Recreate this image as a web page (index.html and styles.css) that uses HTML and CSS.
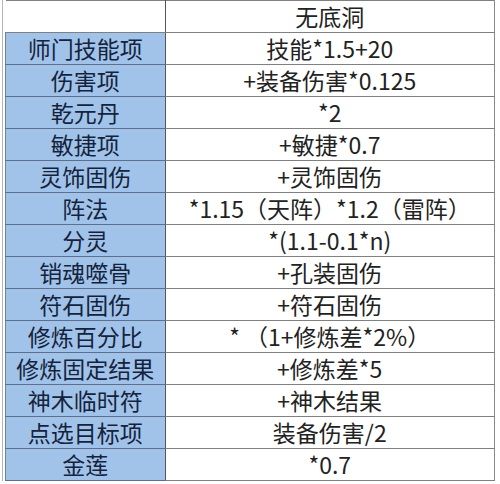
FILE: index.html
```html
<!DOCTYPE html>
<html lang="zh">
<head>
<meta charset="utf-8">
<link rel="stylesheet" href="styles.css">
</head>
<body>
<div class="frame">
<table class="grid">
<tr><td class="key blank"></td><td class="val">无底洞</td></tr>
<tr><td class="key">师门技能项</td><td class="val">技能*1.5+20</td></tr>
<tr><td class="key">伤害项</td><td class="val">+装备伤害*0.125</td></tr>
<tr><td class="key">乾元丹</td><td class="val">*2</td></tr>
<tr><td class="key">敏捷项</td><td class="val">+敏捷*0.7</td></tr>
<tr><td class="key">灵饰固伤</td><td class="val">+灵饰固伤</td></tr>
<tr><td class="key">阵法</td><td class="val">*1.15（天阵）*1.2（雷阵）</td></tr>
<tr><td class="key">分灵</td><td class="val">*(1.1-0.1*n)</td></tr>
<tr><td class="key">销魂噬骨</td><td class="val">+孔装固伤</td></tr>
<tr><td class="key">符石固伤</td><td class="val">+符石固伤</td></tr>
<tr><td class="key">修炼百分比</td><td class="val">* （1+修炼差*2%）</td></tr>
<tr><td class="key">修炼固定结果</td><td class="val">+修炼差*5</td></tr>
<tr><td class="key">神木临时符</td><td class="val">+神木结果</td></tr>
<tr><td class="key">点选目标项</td><td class="val">装备伤害/2</td></tr>
<tr><td class="key">金莲</td><td class="val">*0.7</td></tr>
</table>
</div>
</body>
</html>
```
FILE: styles.css
```css
html, body {
  margin: 0;
  padding: 0;
  background: #ffffff;
}
body {
  font-family: "Noto Sans CJK SC", "Noto Sans", sans-serif;
  width: 500px;
  height: 484px;
  overflow: hidden;
}
.frame {
  margin-left: 2px;
  width: 493px;
  border-left: 1px solid #b4b4b4;
  padding-left: 2px;
  box-sizing: border-box;
}
.grid {
  border-collapse: collapse;
  width: 490px;
  table-layout: fixed;
}
.grid td {
  height: 31px;
  padding: 0;
  text-align: center;
  vertical-align: middle;
  font-size: 23px;
  line-height: 31px;
  white-space: nowrap;
  border-top: 1px solid #808080;
  border-bottom: 1px solid #808080;
}
.key {
  width: 159px;
  background: #a2c3e9;
  color: #14233d;
  border-left: 1px solid #6f7f96;
  border-right: 1px solid #555555;
}
.grid td.key {
  border-top-color: #5d6f8c;
  border-bottom-color: #5d6f8c;
}
.grid td.key.blank {
  background: #ffffff;
  border-left: none;
  border-top-color: #808080;
  border-bottom-color: #808080;
}
.val {
  color: #222222;
  border-right: 1px solid #8a8a8a;
}
```
